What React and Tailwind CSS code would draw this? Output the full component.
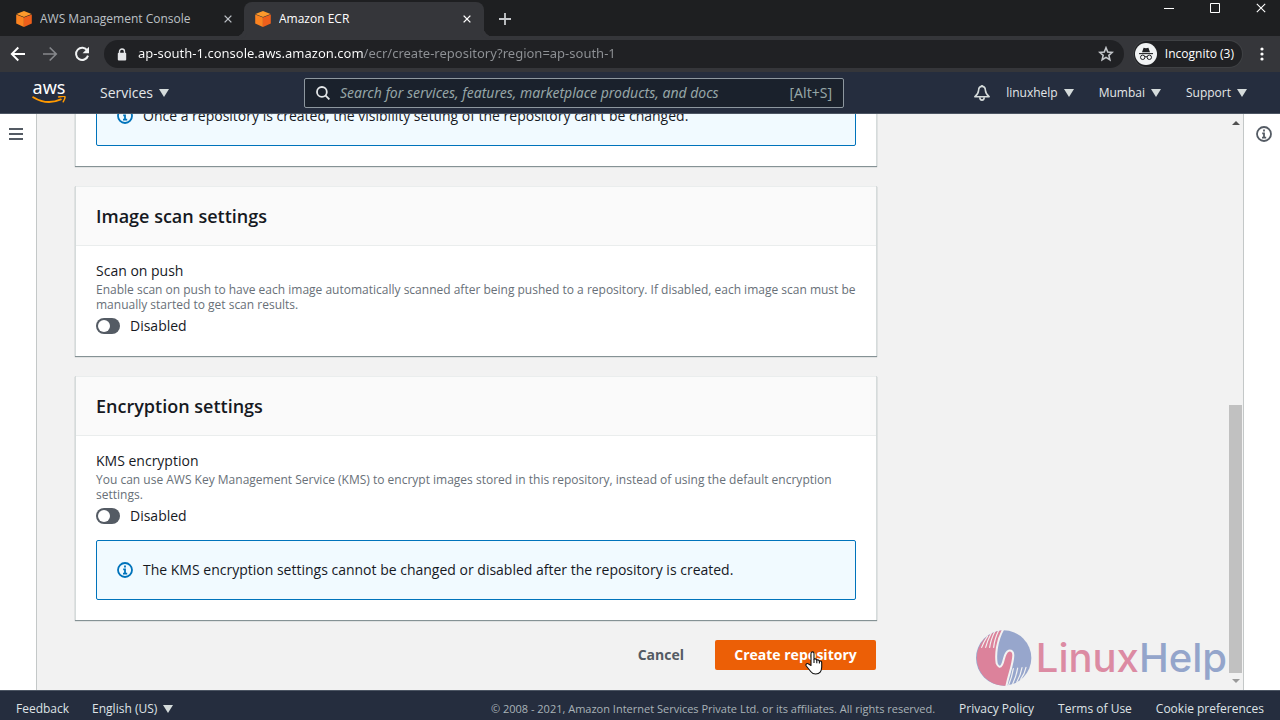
import React from "react";

const Cube = () => (
  <svg viewBox="0 0 16 16" className="size-4 shrink-0" aria-hidden="true">
    <path d="M8 0 15.6 3 8 6 .4 3Z" fill="#fd9a2b" />
    <path d="M.2 3.4 7.9 6.4V16L.2 12.4Z" fill="#fb8320" />
    <path d="M15.8 3.4 8 6.4V16l7.8-3.6Z" fill="#ee5f1b" />
  </svg>
);

const Cross = ({ className = "size-2", width = 1.7 }) => (
  <svg viewBox="0 0 10 10" className={className} fill="none" stroke="currentColor" strokeWidth={width} aria-hidden="true">
    <path d="M.8.8 9.2 9.2M9.2.8.8 9.2" />
  </svg>
);

const Caret = () => (
  <svg viewBox="0 0 10 8" className="h-2 w-2.5" fill="#d5dbdb" aria-hidden="true">
    <path d="M0 0h10L5 8Z" />
  </svg>
);

const Info = ({ className = "size-4" }) => (
  <svg viewBox="0 0 16 16" className={className} fill="none" stroke="currentColor" aria-hidden="true">
    <circle cx="8" cy="8" r="7" strokeWidth="1.8" />
    <path d="M8 3.6v2M6.2 7.4H8v4M6 11.6h4.2" strokeWidth="1.8" />
  </svg>
);

function Tab({ title, active }) {
  return (
    <div
      className={
        active
          ? "relative flex h-[34px] w-60 items-center rounded-t-lg bg-[#35363a] pr-[11px] pl-[11px] text-white before:absolute before:bottom-0 before:-left-2 before:size-2 before:rounded-br-lg before:shadow-[3px_3px_0_#35363a] after:absolute after:-right-2 after:bottom-0 after:size-2 after:rounded-bl-lg after:shadow-[-3px_3px_0_#35363a]"
          : "flex h-[34px] w-[244px] items-center pr-2.5 pl-4 text-[#bdc1c6]"
      }
    >
      <Cube />
      <span className="ml-2 flex-1 truncate">{title}</span>
      <button type="button" aria-label={`Close ${title}`} className="p-0.5">
        <Cross />
      </button>
    </div>
  );
}

function Browser() {
  return (
    <header className="shrink-0 text-xs text-white">
      <div className="flex h-9 justify-between bg-[#1e1f21]">
        <div className="flex items-end">
          <Tab title="AWS Management Console" />
          <Tab title="Amazon ECR" active />
          <button type="button" aria-label="New tab" className="flex h-[34px] items-center pl-[15px] text-[#c8cace]">
            <svg viewBox="0 0 12 12" className="size-3" stroke="currentColor" strokeWidth="1.8" aria-hidden="true">
              <path d="M6 0v12M0 6h12" />
            </svg>
          </button>
        </div>
        <div className="flex h-4 items-center gap-9 pr-3.5">
          <button type="button" aria-label="Minimize">
            <svg viewBox="0 0 10 10" className="size-2.5" stroke="white" aria-hidden="true">
              <path d="M0 5.5h10" />
            </svg>
          </button>
          <button type="button" aria-label="Maximize">
            <svg viewBox="0 0 10 10" className="size-2.5" stroke="white" fill="none" aria-hidden="true">
              <path d="M.5.5h9v9h-9Z" />
            </svg>
          </button>
          <button type="button" aria-label="Close window">
            <Cross className="size-2.5" width={1.1} />
          </button>
        </div>
      </div>
      <div className="flex h-9 items-center bg-[#35363a] pr-4 pl-2.5">
        <div className="flex w-[94px] items-center gap-4">
          <button type="button" aria-label="Back">
            <svg viewBox="0 0 16 16" className="size-4" fill="none" stroke="white" strokeWidth="1.9" aria-hidden="true">
              <path d="M15 8H2M8.3 1.5 1.8 8l6.5 6.5" />
            </svg>
          </button>
          <button type="button" aria-label="Forward">
            <svg viewBox="0 0 16 16" className="size-4" fill="none" stroke="#86888c" strokeWidth="1.7" aria-hidden="true">
              <path d="M1 8h13M7.7 1.5 14.2 8l-6.5 6.5" />
            </svg>
          </button>
          <button type="button" aria-label="Reload">
            <svg viewBox="0 0 16 16" className="size-4" fill="none" stroke="#f1f3f4" strokeWidth="2" aria-hidden="true">
              <path d="M13.3 4.6A6.1 6.1 0 1 0 14 9.6" />
              <path d="M15 .8v6.4H8.6Z" fill="#f1f3f4" stroke="none" />
            </svg>
          </button>
        </div>
        <div className="flex h-7 flex-1 items-center rounded-full bg-[#202124] pr-2.5 pl-[13px]">
          <svg viewBox="0 0 10 13" className="mr-[11px] h-[13px] w-2.5 shrink-0" aria-hidden="true">
            <path d="M2.5 6V3.5a2.5 2.5 0 0 1 5 0V6" fill="none" stroke="#e4e6e8" strokeWidth="1.4" />
            <rect x=".8" y="4.8" width="8.4" height="7.7" rx="1" fill="#e4e6e8" />
          </svg>
          <input
            aria-label="Address"
            defaultValue="ap-south-1.console.aws.amazon.com/ecr/create-repository?region=ap-south-1"
            className="min-w-0 flex-1 bg-[linear-gradient(to_right,#ffffff_226px,#8f9296_226px)] bg-clip-text font-['Noto_Sans',sans-serif] text-[13px] text-transparent outline-none"
          />
          <button type="button" aria-label="Bookmark this tab">
            <svg viewBox="0 0 24 24" className="size-4" fill="none" stroke="#c4c7cb" strokeWidth="2.4" aria-hidden="true">
              <path d="m12 2.6 2.6 6.3 6.8.6-5.1 4.5 1.5 6.7L12 17.1l-5.8 3.6 1.5-6.7L2.6 9.5l6.8-.6Z" />
            </svg>
          </button>
        </div>
        <button type="button" className="ml-2.5 flex h-[26px] items-center rounded-full bg-[#202124] pr-2 pl-px ring-1 ring-[#3f4144]">
          <svg viewBox="0 0 22 22" className="mr-2 size-[22px]" aria-hidden="true">
            <circle cx="11" cy="11" r="11" fill="#f1f3f4" />
            <path d="M7 9.2 8.6 4.8q2.4.9 4.8 0L15 9.2Z" fill="#202124" />
            <path d="M4 10.6h14" stroke="#202124" strokeWidth="1.1" />
            <g fill="none" stroke="#202124">
              <circle cx="7.7" cy="14.3" r="2.2" />
              <circle cx="14.3" cy="14.3" r="2.2" />
              <path d="M9.8 14q1.2-.9 2.4 0" />
            </g>
          </svg>
          Incognito (3)
        </button>
        <button type="button" aria-label="Browser menu" className="ml-[18px]">
          <svg viewBox="0 0 4 14" className="h-3.5 w-1" fill="white" aria-hidden="true">
            <circle cx="2" cy="2" r="1.6" />
            <circle cx="2" cy="7" r="1.6" />
            <circle cx="2" cy="12" r="1.6" />
          </svg>
        </button>
      </div>
    </header>
  );
}

function MenuButton({ children }) {
  return (
    <button type="button" className="flex items-center gap-1.5">
      {children}
      <Caret />
    </button>
  );
}

function AwsNav() {
  return (
    <nav className="flex h-[42px] shrink-0 items-center border-b border-[#4c5563] bg-[#252d3e] text-[#e4e7e9]">
      <a href="#home" aria-label="AWS home" className="mb-0.5 ml-8 flex w-[34px] flex-col items-center text-white">
        <span className="font-['Noto_Sans',sans-serif] text-[18px] leading-[14px]">aws</span>
        <svg viewBox="0 0 34 8" className="mt-0.5 h-2 w-[34px]" aria-hidden="true">
          <path d="M1.2 1.2Q15 9.6 28.8 3.4" fill="none" stroke="#ff9900" strokeWidth="1.9" strokeLinecap="round" />
          <path d="M26.6.9q6-1.2 6.4 0Q33.3 2.6 31.2 5.8" fill="none" stroke="#ff9900" strokeWidth="1.5" strokeLinecap="round" />
        </svg>
      </a>
      <button type="button" className="ml-[34px] flex w-[204px] items-center gap-1.5 text-sm">
        Services
        <Caret />
      </button>
      <label className="flex h-[30px] w-[540px] items-center rounded-xs border border-[#8d979f] bg-[#1a212c] px-[11px]">
        <svg viewBox="0 0 14 14" className="mr-2.5 size-3.5 shrink-0" fill="none" stroke="#e4e7e9" strokeWidth="1.8" aria-hidden="true">
          <circle cx="5.9" cy="5.9" r="4.9" />
          <path d="m9.4 9.4 4 4" />
        </svg>
        <input
          type="text"
          aria-label="Search"
          placeholder="Search for services, features, marketplace products, and docs"
          className="min-w-0 flex-1 font-['Noto_Sans',sans-serif] text-sm outline-none placeholder:text-[#95a5a6] placeholder:italic"
        />
        <span className="font-['Noto_Sans',sans-serif] text-sm text-[#95a5a6]">[Alt+S]</span>
      </label>
      <div className="ml-auto flex items-center pr-[33px] text-xs">
        <button type="button" aria-label="Notifications" className="mr-4">
          <svg viewBox="0 0 16 16" className="size-4" fill="none" stroke="#d5dbdb" strokeWidth="1.6" strokeLinejoin="round" aria-hidden="true">
            <path d="M8 1.4C5.700 1.400 4.700 3.200 4.600 5.200 4.400 8.400 3 10 .9 11.700h14.200C13 10 11.600 8.400 11.400 5.200 11.300 3.200 10.300 1.400 8 1.400Z" />
            <path d="M5.800 12.200a2.200 2.900 0 0 0 4.400 0M8 0v1.400" />
          </svg>
        </button>
        <div className="flex items-center gap-[25px]">
          <MenuButton>linuxhelp</MenuButton>
          <MenuButton>Mumbai</MenuButton>
          <MenuButton>Support</MenuButton>
        </div>
      </div>
    </nav>
  );
}

const cardClass = "border-x border-[#d5dbdb] bg-white shadow-[0_1px_1px_rgba(0,28,36,0.45)]";

function Alert({ children }) {
  return (
    <div className="flex h-[60px] items-center gap-2.5 rounded-xs border border-[#0073bb] bg-[#f1faff] px-5 text-sm">
      <span className="text-[#0073bb]">
        <Info />
      </span>
      <p>{children}</p>
    </div>
  );
}

function SettingsCard({ title, label, description, id, children }) {
  return (
    <section className={cardClass}>
      <h2 className="border-y border-[#eaeded] bg-[#fafafa] px-5 text-lg leading-[58px] font-semibold">{title}</h2>
      <div className="px-5 pt-3.5 pb-[19px]">
        <h3 className="text-sm leading-[22px]">{label}</h3>
        <p id={`${id}-description`} className="text-xs leading-[15px] text-[#687078]">{description}</p>
        <label className="mt-[3px] flex h-[22px] items-center gap-2.5 text-sm">
          <input
            type="checkbox"
            role="switch"
            aria-describedby={`${id}-description`}
            className="relative h-4 w-6 appearance-none rounded-full bg-[#545b64] before:absolute before:top-0.5 before:left-0.5 before:size-3 before:rounded-full before:bg-white checked:bg-[#0073bb] checked:before:left-2.5"
          />
          Disabled
        </label>
        {children}
      </div>
    </section>
  );
}

function Watermark() {
  return (
    <div className="pointer-events-none absolute right-0.5 bottom-1 flex items-center gap-1">
      <svg viewBox="0 0 168 168" className="size-14" aria-hidden="true">
        <circle cx="83" cy="84" r="83" fill="#97a6cc" />
        <path d="M80 1C62 32 58 75 62 100q8 18 16 4c8-14 6-38 20-42q14-2 14 14c-1 30-14 55-21 91A83 83 0 1 1 80 1Z" fill="#dc829b" />
        <g fill="none" stroke="#f2f2f2" strokeLinecap="round">
          <path d="M81-1C62 32 58 75 62 100q8 18 16 4c8-14 6-38 20-42q14-2 14 14c-1 30-14 55-21 93" strokeWidth="6" />
          <path d="M17 52Q23 36 35 18M29 52Q34 32 46 9M41 52Q44 30 57 3M53 52Q55 28 69-1" strokeWidth="3.5" />
          <path d="M98 165Q108 140 112 116M110 162Q121 138 125 114M122 157Q134 136 138 113M134 148Q146 132 150 112" strokeWidth="3.5" />
        </g>
      </svg>
      <span className="font-['Inter',sans-serif] text-[40px] leading-none font-medium text-[#94a5cb]">
        <span className="text-[#dc8ba3]">Linux</span>Help
      </span>
    </div>
  );
}

export default function App() {
  return (
    <div className="flex h-screen flex-col overflow-hidden bg-[#f2f3f3] font-['Open_Sans',sans-serif] text-[#16191f]">
      <Browser />
      <AwsNav />
      <div className="flex min-h-0 flex-1">
        <aside className="flex w-[37px] shrink-0 items-start border-r border-[#c4c8c8] bg-white pt-3.5 pl-[9px]">
          <button type="button" aria-label="Open navigation">
            <svg viewBox="0 0 14 12" className="h-3 w-3.5" stroke="#545b64" strokeWidth="2" aria-hidden="true">
              <path d="M0 1h14M0 6h14M0 11h14" />
            </svg>
          </button>
        </aside>
        <main className="relative flex min-w-0 flex-1 flex-col justify-end overflow-hidden bg-[#f2f2f2] pl-[38px]">
          <div className="flex w-[802px] flex-col gap-5 pb-5">
            <section className={cardClass}>
              <div className="px-5 pb-5">
                <Alert>Once a repository is created, the visibility setting of the repository can't be changed.</Alert>
              </div>
            </section>
            <SettingsCard
              id="scan"
              title="Image scan settings"
              label="Scan on push"
              description="Enable scan on push to have each image automatically scanned after being pushed to a repository. If disabled, each image scan must be manually started to get scan results."
            />
            <SettingsCard
              id="kms"
              title="Encryption settings"
              label="KMS encryption"
              description="You can use AWS Key Management Service (KMS) to encrypt images stored in this repository, instead of using the default encryption settings."
            >
              <div className="pt-[13px] pb-px">
                <Alert>The KMS encryption settings cannot be changed or disabled after the repository is created.</Alert>
              </div>
            </SettingsCard>
            <div className="flex items-center justify-end gap-[31px] pr-px text-sm font-bold">
              <button type="button" className="text-[#545b64]">Cancel</button>
              <button type="button" className="relative h-[30px] w-[161px] rounded-xs bg-[#ec5f06] text-white">
                Create repository
                <svg viewBox="0 0 18 24" className="pointer-events-none absolute top-[11px] left-[90px] h-6 w-[18px]" fill="white" stroke="#111" strokeWidth="1.1" strokeLinejoin="round" aria-hidden="true">
                  <path d="M6 14.5V2.5q0-1.6 1.5-1.6T9 2.5V8q2.2-.6 2.8 1 2-.6 2.6 1 2.3-.4 2.3 1.7V16q0 3-1.5 5.2-1.5 1.8-4.5 1.8-3.3 0-5-2.5L1.3 15q-.9-1.5.3-2.3 1.2-.6 2.4.6Z" />
                  <path d="M9 8v4M11.8 9v3.2M14.4 10v2.5" fill="none" />
                </svg>
              </button>
            </div>
          </div>
          <Watermark />
        </main>
        <div className="flex w-[15px] shrink-0 flex-col items-center border-r border-[#c4c8c8] bg-[#f2f2f2] pr-px" aria-hidden="true">
          <svg viewBox="0 0 8 4" className="my-[7px] h-1 w-2" fill="#505050"><path d="M0 4h8L4 0Z" /></svg>
          <div className="flex-1" />
          <div className="h-[46.5%] w-[13px] bg-[#c1c1c1]" />
          <svg viewBox="0 0 8 4" className="mt-1.5 mb-[7px] h-1 w-2" fill="#9a9a9a"><path d="M0 0h8L4 4Z" /></svg>
        </div>
        <aside className="flex w-9 shrink-0 items-start bg-white pt-3 pl-3 text-[#545b64]">
          <button type="button" aria-label="Open help panel">
            <Info />
          </button>
        </aside>
      </div>
      <footer className="h-[30px] shrink-0 border-t border-[#4c5563] bg-[#252d3e] text-xs leading-[35px] text-[#dfe3e6]">
        <div className="flex pr-4 pl-4">
          <button type="button" className="mr-[23px] h-[35px]">Feedback</button>
          <button type="button" className="flex h-[35px] items-center gap-1.5">
            English (US)
            <Caret />
          </button>
          <p className="mr-6 ml-auto text-[11px] text-[#a9b3b8]">© 2008 - 2021, Amazon Internet Services Private Ltd. or its affiliates. All rights reserved.</p>
          <div className="flex gap-6">
            <a href="#privacy">Privacy Policy</a>
            <a href="#terms">Terms of Use</a>
            <a href="#cookies">Cookie preferences</a>
          </div>
        </div>
      </footer>
    </div>
  );
}
